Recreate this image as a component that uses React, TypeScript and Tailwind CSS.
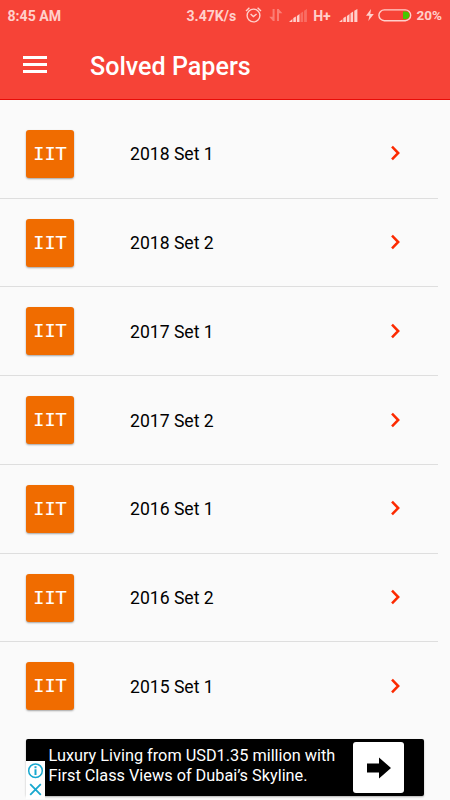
import React from "react";

const papers = [
  "2018 Set 1",
  "2018 Set 2",
  "2017 Set 1",
  "2017 Set 2",
  "2016 Set 1",
  "2016 Set 2",
  "2015 Set 1",
];

const StatusBar: React.FC = () => {
  return (
    <div className="flex h-8 items-center pl-[7.5px] pr-2 text-[14.1px] font-bold leading-none text-[#ffd0cb]">
      <span className="w-[180px] whitespace-nowrap">8:45 AM</span>
      <span className="w-[59px] whitespace-nowrap">3.47K/s</span>
      <svg className="h-[18px] w-[18px] shrink-0 -translate-y-px" viewBox="0 0 18 18" fill="none" stroke="currentColor" strokeWidth="1.4">
        <circle cx="8.5" cy="9.5" r="6.4" />
        <path d="M5.6 7.9 8.4 10.6 11.6 8M1 5 4.4 1.8M16 5 12.6 1.8" />
      </svg>
      <svg className="ml-[6px] h-[14px] w-[14px] shrink-0 -translate-y-px" viewBox="0 0 14 14" fill="#fb7d74">
        <path d="M3.6 1h2v12h-2zM.2 8.8h3.4v3.8zM8 1h2v12H8zM10 1.4l3.4 3.8H10z" />
      </svg>
      <svg className="ml-[6px] h-[13px] w-[20px] shrink-0 -translate-y-px" viewBox="0 0 20 13" fill="currentColor">
        <path d="M3.4 10v3H0zM4.3 8.9l2.6-1.4V13H4.3zM7.9 6.9l2.6-2V13H7.9z" />
        <path d="M11.5 4.2l2.6-1.7V13h-2.6zM15.1 1.8 17.9 0v13h-2.8z" opacity=".3" />
      </svg>
      <span className="ml-[4px] w-[26px]">H+</span>
      <svg className="h-[13px] w-[19px] shrink-0 -translate-y-px" viewBox="0 0 19 13" fill="currentColor">
        <path d="M3.4 10.3V13H0zM4.3 9l2.6-1.5V13H4.3zM7.9 6.9l2.6-1.8V13H7.9zM11.5 4.2l2.6-1.7V13h-2.6zM15.3 1.8 18.4 0v13h-3.1z" />
      </svg>
      <svg className="ml-[8px] h-[14px] w-[8px] shrink-0 -translate-y-px" viewBox="0 0 8 14" fill="currentColor">
        <path d="M5 1 0 7.8h3.4L2.3 13 7.8 6H4.3z" />
      </svg>
      <svg className="ml-[4px] h-[13px] w-[34px] shrink-0 -translate-y-px" viewBox="0 0 34 13" fill="none">
        <rect x=".9" y=".9" width="31.8" height="10.8" rx="5.4" stroke="currentColor" strokeWidth="1.4" />
        <path d="M25 2.6h2.7a3.7 3.7 0 0 1 0 7.4H25z" fill="#46c800" />
      </svg>
      <span className="ml-[4.5px] text-[13.5px]">20%</span>
    </div>
  );
};

const Header: React.FC = () => {
  return (
    <header className="h-[100px] border-b border-[#e80c08] bg-[#f64337]">
      <StatusBar />
      <div className="flex h-[67px] items-center pl-[23px]">
        <button aria-label="Menu" className="mb-[2px] flex w-6 flex-col gap-1">
          <span className="h-[3px] bg-white" />
          <span className="h-[3px] bg-white" />
          <span className="h-[3px] bg-white" />
        </button>
        <h1 className="ml-[43px] whitespace-nowrap pt-[2px] text-[25.1px] font-medium text-white">
          Solved Papers
        </h1>
      </div>
    </header>
  );
};

const PaperRow: React.FC<{ title: string }> = ({ title }) => {
  return (
    <li className="mr-3 flex h-[88.75px] items-center border-b border-[#dedede] pl-[26px] last:border-transparent">
      <div className="flex h-12 w-12 items-center justify-center rounded-[3px] bg-[#f06c00] font-['DejaVu_Sans_Mono',monospace] text-[18.5px] text-white shadow-[0_1px_2px_rgba(0,0,0,0.35)] [-webkit-text-stroke:0.15px_white]">
        IIT
      </div>
      <span className="ml-14 pt-[1.5px] text-[17.6px] text-black">{title}</span>
      <svg className="mb-px ml-auto mr-[36px] h-[16px] w-[12px]" viewBox="0 0 12 16" fill="none" stroke="#fc2a00" strokeWidth="2.5">
        <path d="M2 1.7 8.2 8 2 14.3" />
      </svg>
    </li>
  );
};

const AdBanner: React.FC = () => {
  return (
    <div className="relative ml-[26px] flex h-[57px] w-[398px] rounded-[2px] bg-black shadow-[0_1px_2px_rgba(0,0,0,0.3)]">
      <p className="ml-[22.5px] w-[304.5px] whitespace-nowrap pt-[7px] text-[16.3px] leading-5 text-white">
        Luxury Living from USD1.35 million with
        <br />
        First Class Views of Dubai’s Skyline.
      </p>
      <div className="mt-[3px] flex h-[51px] w-[51px] items-center justify-center rounded-[3px] bg-white">
        <svg className="h-[22px] w-[26px]" viewBox="0 0 26 22" fill="black">
          <path d="M1 6.5h12V.5L25 11 13 21.5v-6H1z" />
        </svg>
      </div>
      <div className="absolute left-0 top-[22px] flex h-[38px] w-[19px] flex-col items-center bg-white">
        <svg className="h-[38px] w-[19px]" viewBox="0 0 19 38" fill="none" stroke="#18a8cf" strokeWidth="1.5">
          <circle cx="9.5" cy="9.7" r="6.8" />
          <path d="M9.5 5.2v2M9.5 8.3v5.8" strokeWidth="2" />
          <path d="M4.2 23.2 14.8 33.8M14.8 23.2 4.2 33.8" strokeWidth="1.8" />
        </svg>
      </div>
    </div>
  );
};

const App: React.FC = () => {
  return (
    <div className="h-[800px] w-[450px] overflow-hidden bg-[#fafafa] font-[Roboto,sans-serif]">
      <Header />
      <ul className="h-[639px] overflow-hidden pt-[9.9px]">
        {papers.map((title) => (
          <PaperRow key={title} title={title} />
        ))}
      </ul>
      <AdBanner />
    </div>
  );
};

export default App;
